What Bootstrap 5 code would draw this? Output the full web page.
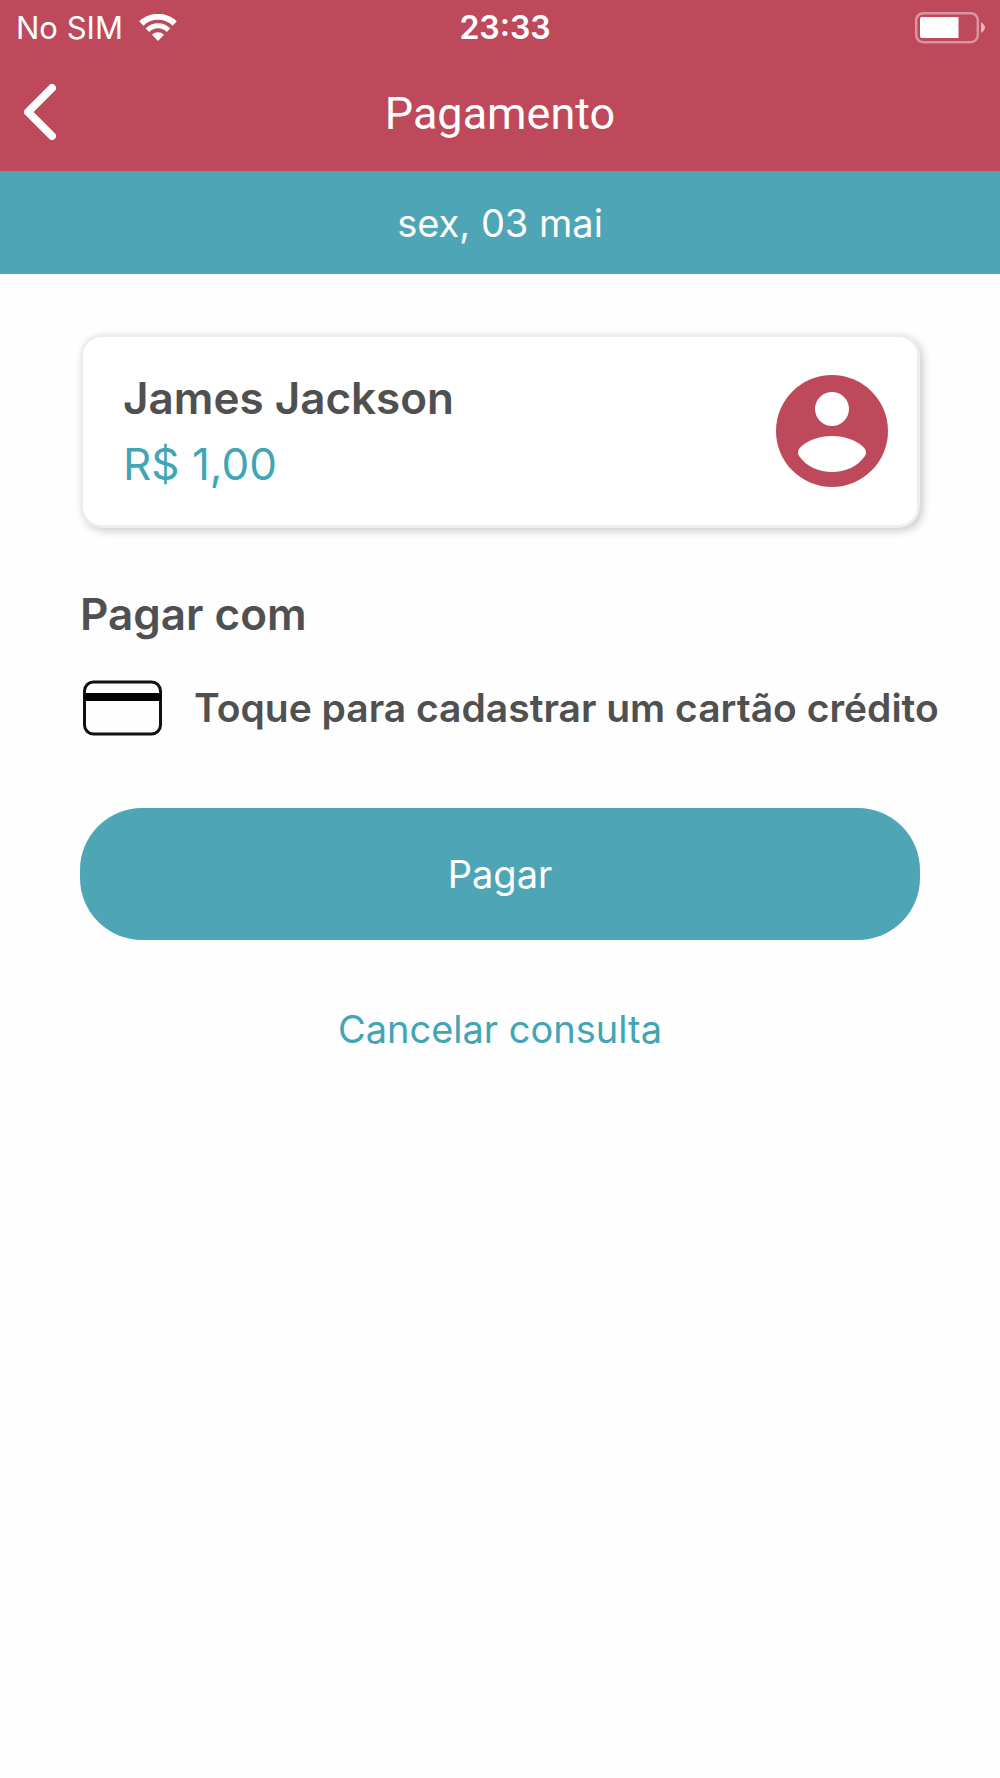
<!DOCTYPE html>
<html lang="pt-BR">
<head>
<meta charset="utf-8">
<meta name="viewport" content="width=device-width, initial-scale=1">
<title>Pagamento</title>
<link href="https://cdn.jsdelivr.net/npm/bootstrap@5.3.0/dist/css/bootstrap.min.css" rel="stylesheet">
<style>
  :root { --brand-red: #be495a; --brand-teal: #4ea5b5; --link-teal: #41a5b5; --ink: #505050; }
  body { font-family: Inter, "Liberation Sans", sans-serif; background: #fefefe; color: var(--ink); }
  .app-header { background: var(--brand-red); }
  .status-bar { height: 56px; padding: 0 14px 0 16px; font-size: 31px; line-height: 56px; }
  .status-side { flex: 1 1 0; gap: 16px; }
  .clock { font-size: 32px; }
  .title-bar { height: 115px; padding: 0 16px; }
  .title-bar h1 { font-family: Roboto, "Liberation Sans", sans-serif; font-size: 45px; line-height: 113px; }
  .back-btn { height: 72px; }
  .title-side { flex: 0 0 48px; }
  .date-band { background: var(--brand-teal); height: 103px; }
  .content { padding: 60px 80px; }
  .payee { border: 3px solid #ededf2; border-radius: 22px; padding: 28px 29px 28px 40px; box-shadow: 3px 3px 8px rgba(0,0,0,.2); }
  .text-title { font-size: 44px; line-height: 66px; }
  .text-method { font-size: 39px; line-height: 60px; }
  .text-action { font-size: 38px; line-height: 60px; }
  .price, .cancel-link { color: var(--link-teal); }
  .pay-with { margin-top: 53px; }
  .add-card { gap: 30px; margin-top: 31px; color: var(--ink); }
  .pay-btn { margin-top: 70px; height: 132px; border-radius: 62px; background: var(--brand-teal); color: #fff; }
  .pay-btn:hover { background: #43909f; color: #fff; }
  .cancel-link { margin-top: 59px; }
</style>
<script src="https://cdn.jsdelivr.net/npm/bootstrap@5.3.0/dist/js/bootstrap.bundle.min.js"></script>
</head>
<body>
<header class="app-header text-white">
  <div class="status-bar d-flex align-items-center">
    <div class="status-side d-flex align-items-center">
      <span>No SIM</span>
      <svg width="38" height="28" viewBox="0 0 38 28" fill="none" stroke="#fff" aria-label="Wi-Fi" role="img">
        <path d="M2.300 9.500a24 24 0 0 1 33.400 0" stroke-width="6"/>
        <path d="M8.500 16.200a14.500 14.500 0 0 1 21 0" stroke-width="5"/>
        <path d="M13 20.700a8.800 8.800 0 0 1 12 0L19 27z" fill="#fff" stroke="none"/>
      </svg>
    </div>
    <span class="clock fw-semibold ms-2">23:33</span>
    <div class="status-side d-flex justify-content-end">
      <svg width="72" height="32" viewBox="0 0 72 32" aria-label="Bateria" role="img">
        <rect x="2.200" y="1.200" width="61.600" height="29" rx="7" fill="none" stroke="#fff" stroke-opacity=".42" stroke-width="2.500"/>
        <path d="M8 5H44.500V26H8a2 2 0 0 1-2-2V7a2 2 0 0 1 2-2z" fill="#fff"/>
        <path d="M67 10q8 5.500 0 11z" fill="#fff" fill-opacity=".6"/>
      </svg>
    </div>
  </div>
  <div class="title-bar d-flex align-items-center">
    <button type="button" class="btn back-btn p-0 border-0 d-flex align-items-center title-side" aria-label="Voltar">
      <svg width="48" height="60" viewBox="0 0 48 60" fill="none" stroke="#fff" stroke-width="8" stroke-linecap="round" stroke-linejoin="round"><path d="M36 4 12 28l24 24"/></svg>
    </button>
    <h1 class="flex-grow-1 text-center fw-normal m-0">Pagamento</h1>
    <span class="title-side"></span>
  </div>
</header>
<div class="date-band text-action d-flex align-items-center justify-content-center text-white">sex, 03 mai</div>
<main class="content d-flex flex-column">
  <section class="payee bg-white d-flex align-items-center justify-content-between">
    <div>
      <h2 class="text-title fw-semibold m-0">James Jackson</h2>
      <div class="text-title price">R$ 1,00</div>
    </div>
    <svg width="112" height="112" viewBox="0 0 112 112" aria-hidden="true">
      <circle cx="56" cy="56" r="56" fill="#be495a"/>
      <circle cx="56" cy="34" r="17" fill="#fff"/>
      <path d="M23 74C30 65 44 61 56 61S82 65 89 74Q91 78 89 81C81 92 69 97 56 97S31 92 23 81Q21 78 23 74z" fill="#fff"/>
    </svg>
  </section>
  <h2 class="text-title fw-semibold mb-0 pay-with">Pagar com</h2>
  <a href="#" class="add-card d-flex align-items-center text-decoration-none text-nowrap">
    <svg class="flex-shrink-0" width="84" height="56" viewBox="0 0 84 56" aria-hidden="true">
      <rect x="4.500" y="2" width="76" height="52" rx="9" fill="none" stroke="#111" stroke-width="3"/>
      <path d="M4 13H81V21H4z" fill="#000"/>
    </svg>
    <span class="text-method fw-semibold">Toque para cadastrar um cartão crédito</span>
  </a>
  <button type="button" class="btn pay-btn text-action w-100">Pagar</button>
  <a href="#" class="cancel-link text-action text-decoration-none align-self-center">Cancelar consulta</a>
</main>
</body>
</html>
